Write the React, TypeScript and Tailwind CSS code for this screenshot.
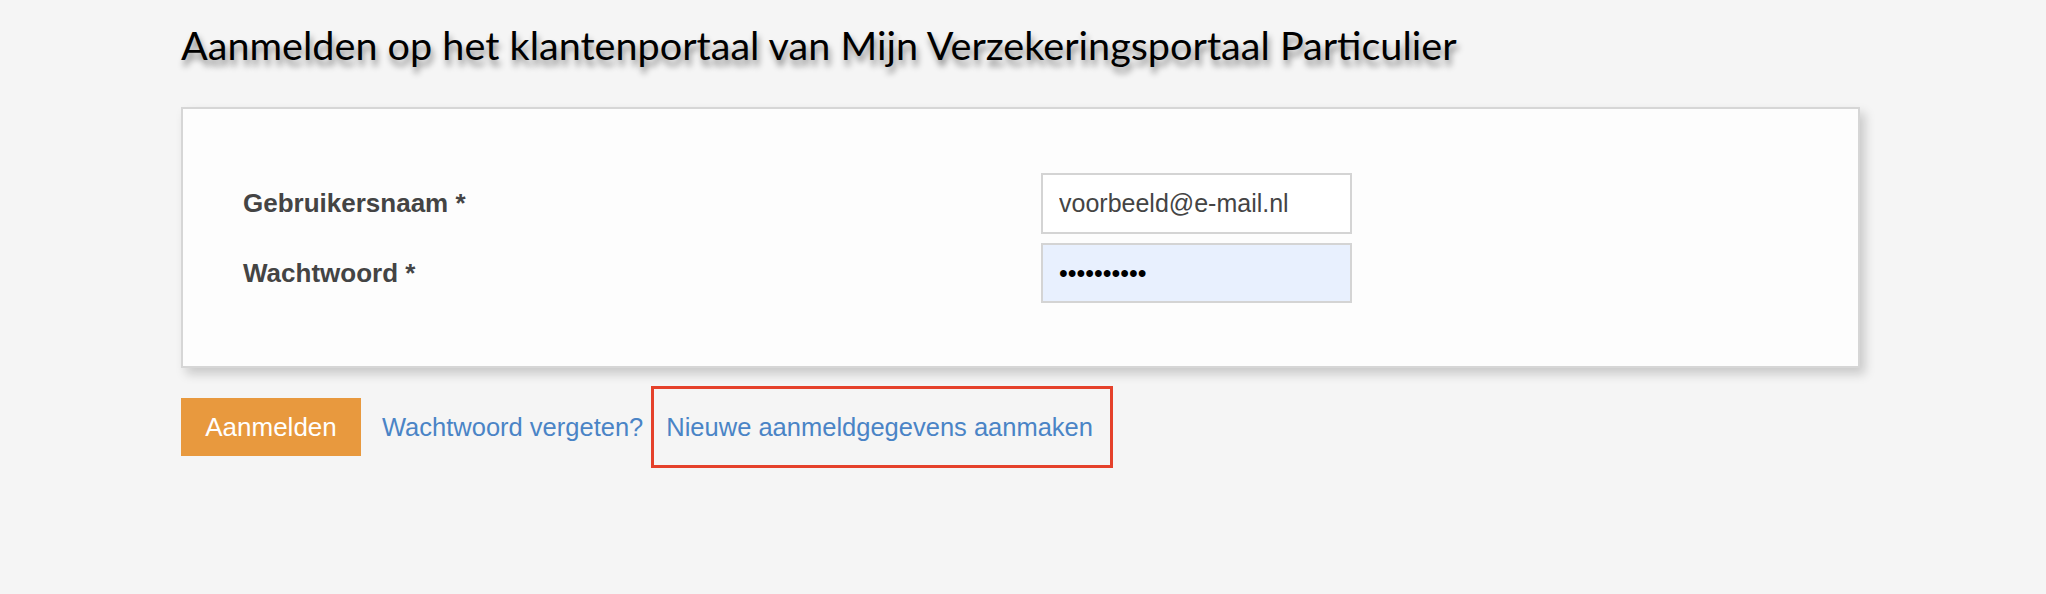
const App = () => {
  return (
    <div className="min-h-screen bg-[#f5f5f5] pl-[181px] pr-[186px] pt-[22px] font-['Liberation_Sans',Arial,sans-serif]">
      {/* Page title */}
      <h1 className="font-['Lato','Liberation_Sans',sans-serif] text-[39.6px] leading-[46px] text-black [text-shadow:2px_6px_6px_rgba(0,0,0,0.45)]">
        Aanmelden op het klantenportaal van Mijn Verzekeringsportaal Particulier
      </h1>

      {/* Login form */}
      <div className="mt-[39px] border-2 border-[#d6d6d6] bg-[#fdfdfd] pl-[60px] pt-[64px] pb-[63px] shadow-[5px_6px_10px_rgba(0,0,0,0.18)]">
        <div className="grid grid-cols-[798px_311px] gap-y-[9px] items-center">
          <label className="text-[26px] font-bold text-[#444]">Gebruikersnaam *</label>
          <input
            readOnly
            value="voorbeeld@e-mail.nl"
            className="h-[61px] w-[311px] border-2 border-[#d4d4d4] bg-white px-[16px] text-[25px] text-[#444] outline-none"
          />
          <label className="text-[26px] font-bold text-[#444]">Wachtwoord *</label>
          <input
            readOnly
            type="password"
            value="wachtwoord"
            className="h-[60px] w-[311px] border-2 border-[#d4d4d4] bg-[#e8f0fe] px-[16px] text-[25px] text-black outline-none"
          />
        </div>
      </div>

      {/* Actions */}
      <div className="mt-[18px] flex items-center">
        <button className="h-[58px] w-[180px] bg-[#e8993e] text-[26px] text-white">
          Aanmelden
        </button>
        <a href="#" className="ml-[21px] text-[25.5px] text-[#4a84c6]">
          Wachtwoord vergeten?
        </a>
        <a
          href="#"
          className="ml-[8px] flex h-[82px] items-center border-[3px] border-[#e5412b] pl-[12px] pr-[17px] text-[25.5px] text-[#4a84c6]"
        >
          Nieuwe aanmeldgegevens aanmaken
        </a>
      </div>
    </div>
  );
};

export default App;
